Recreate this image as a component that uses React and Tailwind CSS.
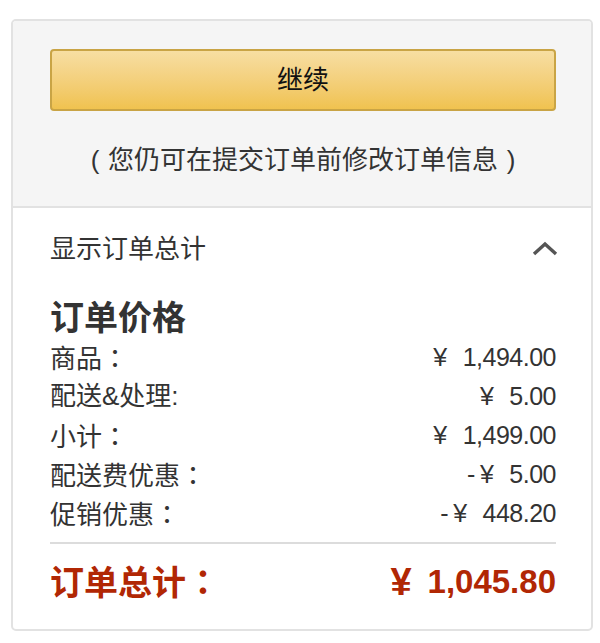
import React from "react";

const rows = [
  { label: "商品", colon: "：", sign: "", amount: "1,494.00" },
  { label: "配送&处理:", colon: "", sign: "", amount: "5.00" },
  { label: "小计", colon: "：", sign: "", amount: "1,499.00" },
  { label: "配送费优惠", colon: "：", sign: "-", amount: "5.00" },
  { label: "促销优惠", colon: "：", sign: "-", amount: "448.20" },
];

const punct = { fontFamily: '"Noto Sans CJK TC", sans-serif' };

const App = () => {
  return (
    <div
      className="min-h-screen bg-white pl-[11px] pt-[19px]"
      style={{ fontFamily: '"Liberation Sans", "Noto Sans CJK SC", sans-serif' }}
    >
      {/* CARD */}
      <div className="w-[582px] h-[612px] rounded-[5px] border-2 border-[#e2e2e2] overflow-hidden">

        {/* TOP: CONTINUE */}
        <div className="bg-[#f5f5f5] border-b-2 border-[#e2e2e2] pl-[37px] pr-[35px] pt-[28px] pb-[28px]">
          <button
            type="button"
            className="w-full h-[62px] rounded-[4px] border-2 border-[#c9a445] bg-gradient-to-b from-[#f7dea2] to-[#f0c24f] text-[26px] leading-none text-[#111]"
          >
            继续
          </button>

          <p className="mt-[31px] h-[36px] leading-[36px] text-center text-[26px] text-[#333]">
            <span className="inline-block w-[26px] text-center">(</span>
            您仍可在提交订单前修改订单信息
            <span className="inline-block w-[26px] text-center">)</span>
          </p>
        </div>

        {/* BOTTOM: SUMMARY */}
        <div className="pl-[37px] pr-[35px] pt-[23px]">

          <div className="flex items-center justify-between h-[36px]">
            <span className="text-[26px] leading-[36px] text-[#333]">显示订单总计</span>
            <svg width="26" height="16" viewBox="0 0 26 16" className="mr-[-2px]">
              <polyline
                points="2,13 13,3 24,13"
                fill="none"
                stroke="#555"
                strokeWidth="3.4"
              />
            </svg>
          </div>

          <h2 className="mt-[31px] h-[40px] leading-[40px] text-[34px] font-bold text-[#333]">
            订单价格
          </h2>

          <div className="flex flex-col">
            {rows.map((row) => (
              <div
                key={row.label}
                className="flex items-center justify-between h-[39px] text-[#333]"
              >
                <span className="text-[26px] leading-[39px]">
                  {row.label}
                  {row.colon && <span style={punct}>{row.colon}</span>}
                </span>
                <span className="flex items-center text-[25px] leading-[39px] tracking-[-0.5px]">
                  {row.sign && <span className="mr-[5px]">{row.sign}</span>}
                  <span className="mr-[16px]">¥</span>
                  {row.amount}
                </span>
              </div>
            ))}
          </div>

          <div className="mt-[9px] h-[2px] bg-[#dcdcdc]" />

          <div className="mt-[16px] flex items-center justify-between h-[44px] text-[#b12704] font-bold">
            <span className="text-[34px] leading-[44px]">
              订单总计<span style={punct}>：</span>
            </span>
            <span className="flex items-center text-[33px] leading-[44px]">
              <span className="mr-[16px] text-[38px] leading-[44px]">¥</span>
              1,045.80
            </span>
          </div>

        </div>
      </div>
    </div>
  );
};

export default App;
